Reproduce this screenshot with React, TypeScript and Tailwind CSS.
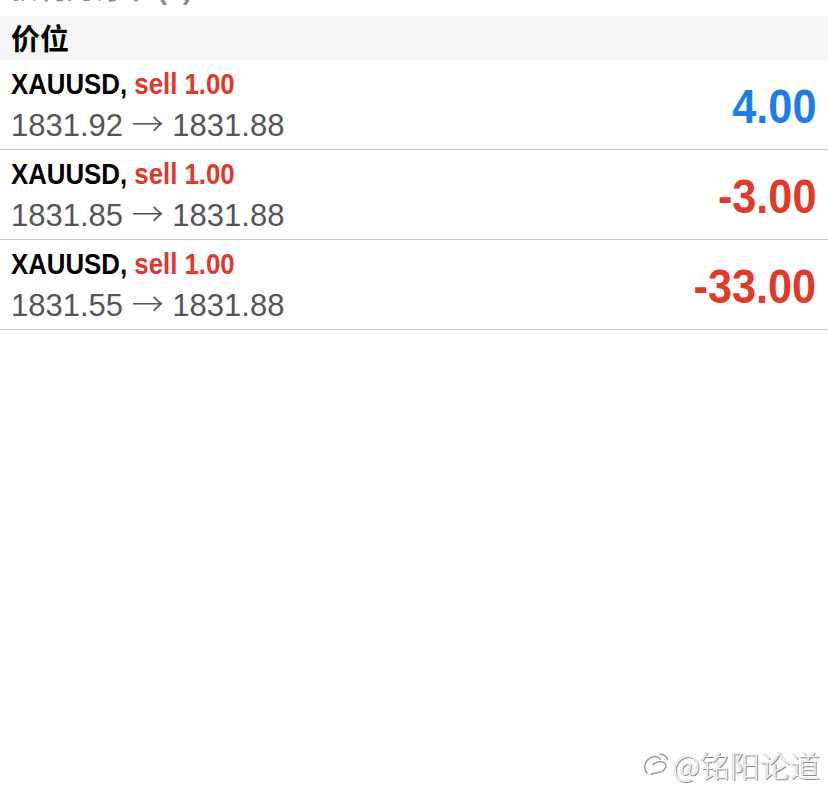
import React from "react";

const sans = { fontFamily: '"Liberation Sans", Arial, sans-serif' };

const positions = [
  { open: "1831.92", close: "1831.88", profit: "4.00", up: true },
  { open: "1831.85", close: "1831.88", profit: "-3.00", up: false },
  { open: "1831.55", close: "1831.88", profit: "-33.00", up: false },
];

export default function App() {
  return (
    <div
      className="w-[828px] h-[810px] bg-white flex flex-col overflow-hidden"
      style={{ fontFamily: '"Liberation Sans", "Noto Sans CJK SC", sans-serif' }}
    >
      {/* cut-off header from the previous section */}
      <div className="h-[16px] overflow-hidden pl-[10px]">
        <div className="-mt-[27px] text-[28px] leading-[34px] text-[#8c8c8c] font-bold">
          获利的订单 (3)
        </div>
      </div>

      {/* section header */}
      <div className="h-[44px] bg-[#f5f5f5] flex items-center pl-[11px]">
        <span className="text-[29px] font-bold text-black" style={{ fontFamily: '"Noto Sans CJK SC", sans-serif' }}>
          价位
        </span>
      </div>

      {/* rows */}
      {positions.map((p) => (
        <div
          key={p.open}
          className="h-[90px] border-b border-[#cbcbcb] flex items-center justify-between pl-[11px] pr-[12px]"
        >
          <div className="flex flex-col pt-[5px]">
            <div
              className="inline-block origin-left scale-x-[0.86] whitespace-nowrap text-[30px] leading-[34px] font-bold"
              style={sans}
            >
              <span className="text-black">XAUUSD, </span>
              <span className="text-[#e0392b]">sell 1.00</span>
            </div>
            <div className="text-[31px] leading-[42px] text-[#555] whitespace-nowrap" style={sans}>
              {p.open}{" "}
              <span style={{ fontFamily: '"Noto Sans CJK SC", sans-serif' }} className="text-[32px] font-light">
                →
              </span>{" "}
              {p.close}
            </div>
          </div>
          <div
            className={`inline-block origin-right scale-x-[0.9] text-[48px] font-bold pt-[4px] ${
              p.up ? "text-[#1b7ee6]" : "text-[#df3a2a]"
            }`}
            style={sans}
          >
            {p.profit}
          </div>
        </div>
      ))}

      <div className="flex-1" />

      {/* watermark */}
      <div className="flex justify-end items-center gap-[2px] pr-[8px] pb-[28px]">
        <svg width="30" height="28" viewBox="0 0 28 26" fill="none" stroke="#9a9a9a" strokeWidth="1.4">
          <path d="M6 22 C2 18 3 10 9 7 C13 5 17 6 18 9" />
          <path d="M11 14 C13 11 19 10 22 12 C25 15 22 20 16 21 C13 22 11 21 9 23" />
          <path d="M17 4 C21 4 24 6 25 9" />
        </svg>
        <span
          className="text-[30px] leading-[36px] text-[#f4f4f4]"
          style={{
            fontFamily: '"Noto Sans CJK SC", sans-serif',
            fontWeight: 300,
            textShadow: "1px 1px 0 #8a8a8a, -0.5px -0.5px 0 #c8c8c8",
          }}
        >
          @铭阳论道
        </span>
      </div>
    </div>
  );
}
